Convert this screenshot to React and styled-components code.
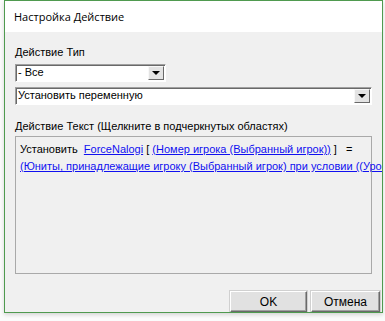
import React from "react";
import styled, { createGlobalStyle } from "styled-components";

const GlobalStyle = createGlobalStyle`
  html, body {
    margin: 0;
    padding: 0;
    background: #f4f4f4;
    overflow: hidden;
  }
  body {
    font-family: "Liberation Sans", Arial, sans-serif;
    font-size: 11px;
    color: #000;
  }
`;

const Desktop = styled.div`
  width: 385px;
  height: 321px;
  display: flex;
  background: #fbfbfb;
  overflow: hidden;
`;

const Window = styled.div`
  margin-left: 4px;
  width: 379px;
  height: 313px;
  box-sizing: border-box;
  border: 1px solid #4f9a4f;
  background: #f0f0f0;
  display: flex;
  flex-direction: column;
  overflow: hidden;
  box-shadow: 0 2px 4px rgba(0, 0, 0, 0.15);
`;

const TitleBar = styled.div`
  height: 31px;
  flex-shrink: 0;
  background: #fff;
  display: flex;
  align-items: center;
  padding-left: 9px;
  font-family: "Open Sans", "Noto Sans", sans-serif;
  font-size: 11px;
  color: #000;
`;

const Body = styled.div`
  flex: 1;
  display: flex;
  flex-direction: column;
  padding: 14px 0 0 10px;
`;

const Label = styled.div`
  line-height: 13px;
  height: 13px;
  margin-top: ${(p) => p.$mt || 0}px;
  white-space: nowrap;
`;

const Combo = styled.div`
  width: ${(p) => p.$w}px;
  height: 18px;
  margin-top: 5px;
  box-sizing: border-box;
  display: flex;
  align-items: stretch;
  background: #fff;
  border-top: 1px solid #a0a0a0;
  border-left: 1px solid #a0a0a0;
  border-right: 1px solid #fff;
  border-bottom: 1px solid #fff;
  box-shadow: inset 1px 1px 0 #696969;
`;

const ComboText = styled.div`
  flex: 1;
  padding-left: 2px;
  line-height: 15px;
  white-space: nowrap;
`;

const ComboButton = styled.div`
  width: 16px;
  margin: 1px 1px 1px 0;
  box-sizing: border-box;
  background: #e3e3e3;
  border-top: 1px solid #f8f8f8;
  border-left: 1px solid #f8f8f8;
  border-right: 1px solid #696969;
  border-bottom: 1px solid #696969;
  display: flex;
  align-items: center;
  justify-content: center;
`;

const Arrow = styled.div`
  width: 0;
  height: 0;
  border-left: 4px solid transparent;
  border-right: 4px solid transparent;
  border-top: 4px solid #000;
`;

const TextBox = styled.div`
  width: 357px;
  height: 138px;
  margin-top: 3px;
  box-sizing: border-box;
  border: 1px solid #a9a9a9;
  padding: 4px 0 0 4px;
  line-height: 17px;
`;

const Line = styled.div`
  white-space: nowrap;
`;

const Link = styled.span`
  color: #1010f0;
  text-decoration: underline;
  text-underline-offset: 1px;
`;

const Footer = styled.div`
  display: flex;
  justify-content: flex-end;
  gap: 4px;
  margin-top: 17px;
  padding-right: 2px;
`;

const Button = styled.div`
  width: ${(p) => p.$w}px;
  height: 21px;
  box-sizing: border-box;
  background: #e1e1e1;
  border-top: 1px solid #fff;
  border-left: 1px solid #fff;
  border-right: 1px solid #6a6a6a;
  border-bottom: 1px solid #6a6a6a;
  box-shadow: inset -1px -1px 0 #a0a0a0, 0 0 0 1px #d0d0d0;
  display: flex;
  align-items: center;
  justify-content: center;
  font-size: 12px;
`;

export default function App() {
  return (
    <>
      <GlobalStyle />
      <Desktop>
        <Window>
          <TitleBar>Настройка Действие</TitleBar>
          <Body>
            <Label>Действие Тип</Label>
            <Combo $w={151}>
              <ComboText>- Все</ComboText>
              <ComboButton>
                <Arrow />
              </ComboButton>
            </Combo>
            <Combo $w={357}>
              <ComboText>Установить переменную</ComboText>
              <ComboButton>
                <Arrow />
              </ComboButton>
            </Combo>
            <Label $mt={15}>Действие Текст (Щелкните в подчеркнутых областях)</Label>
            <TextBox>
              <Line>
                Установить&nbsp; <Link>ForceNalogi</Link> [ <Link>(Номер игрока (Выбранный игрок))</Link> ]&nbsp;&nbsp; =
              </Line>
              <Line>
                <Link>(Юниты, принадлежащие игроку (Выбранный игрок) при условии ((Уров</Link>
              </Line>
            </TextBox>
            <Footer>
              <Button $w={77}>OK</Button>
              <Button $w={69}>Отмена</Button>
            </Footer>
          </Body>
        </Window>
      </Desktop>
    </>
  );
}
